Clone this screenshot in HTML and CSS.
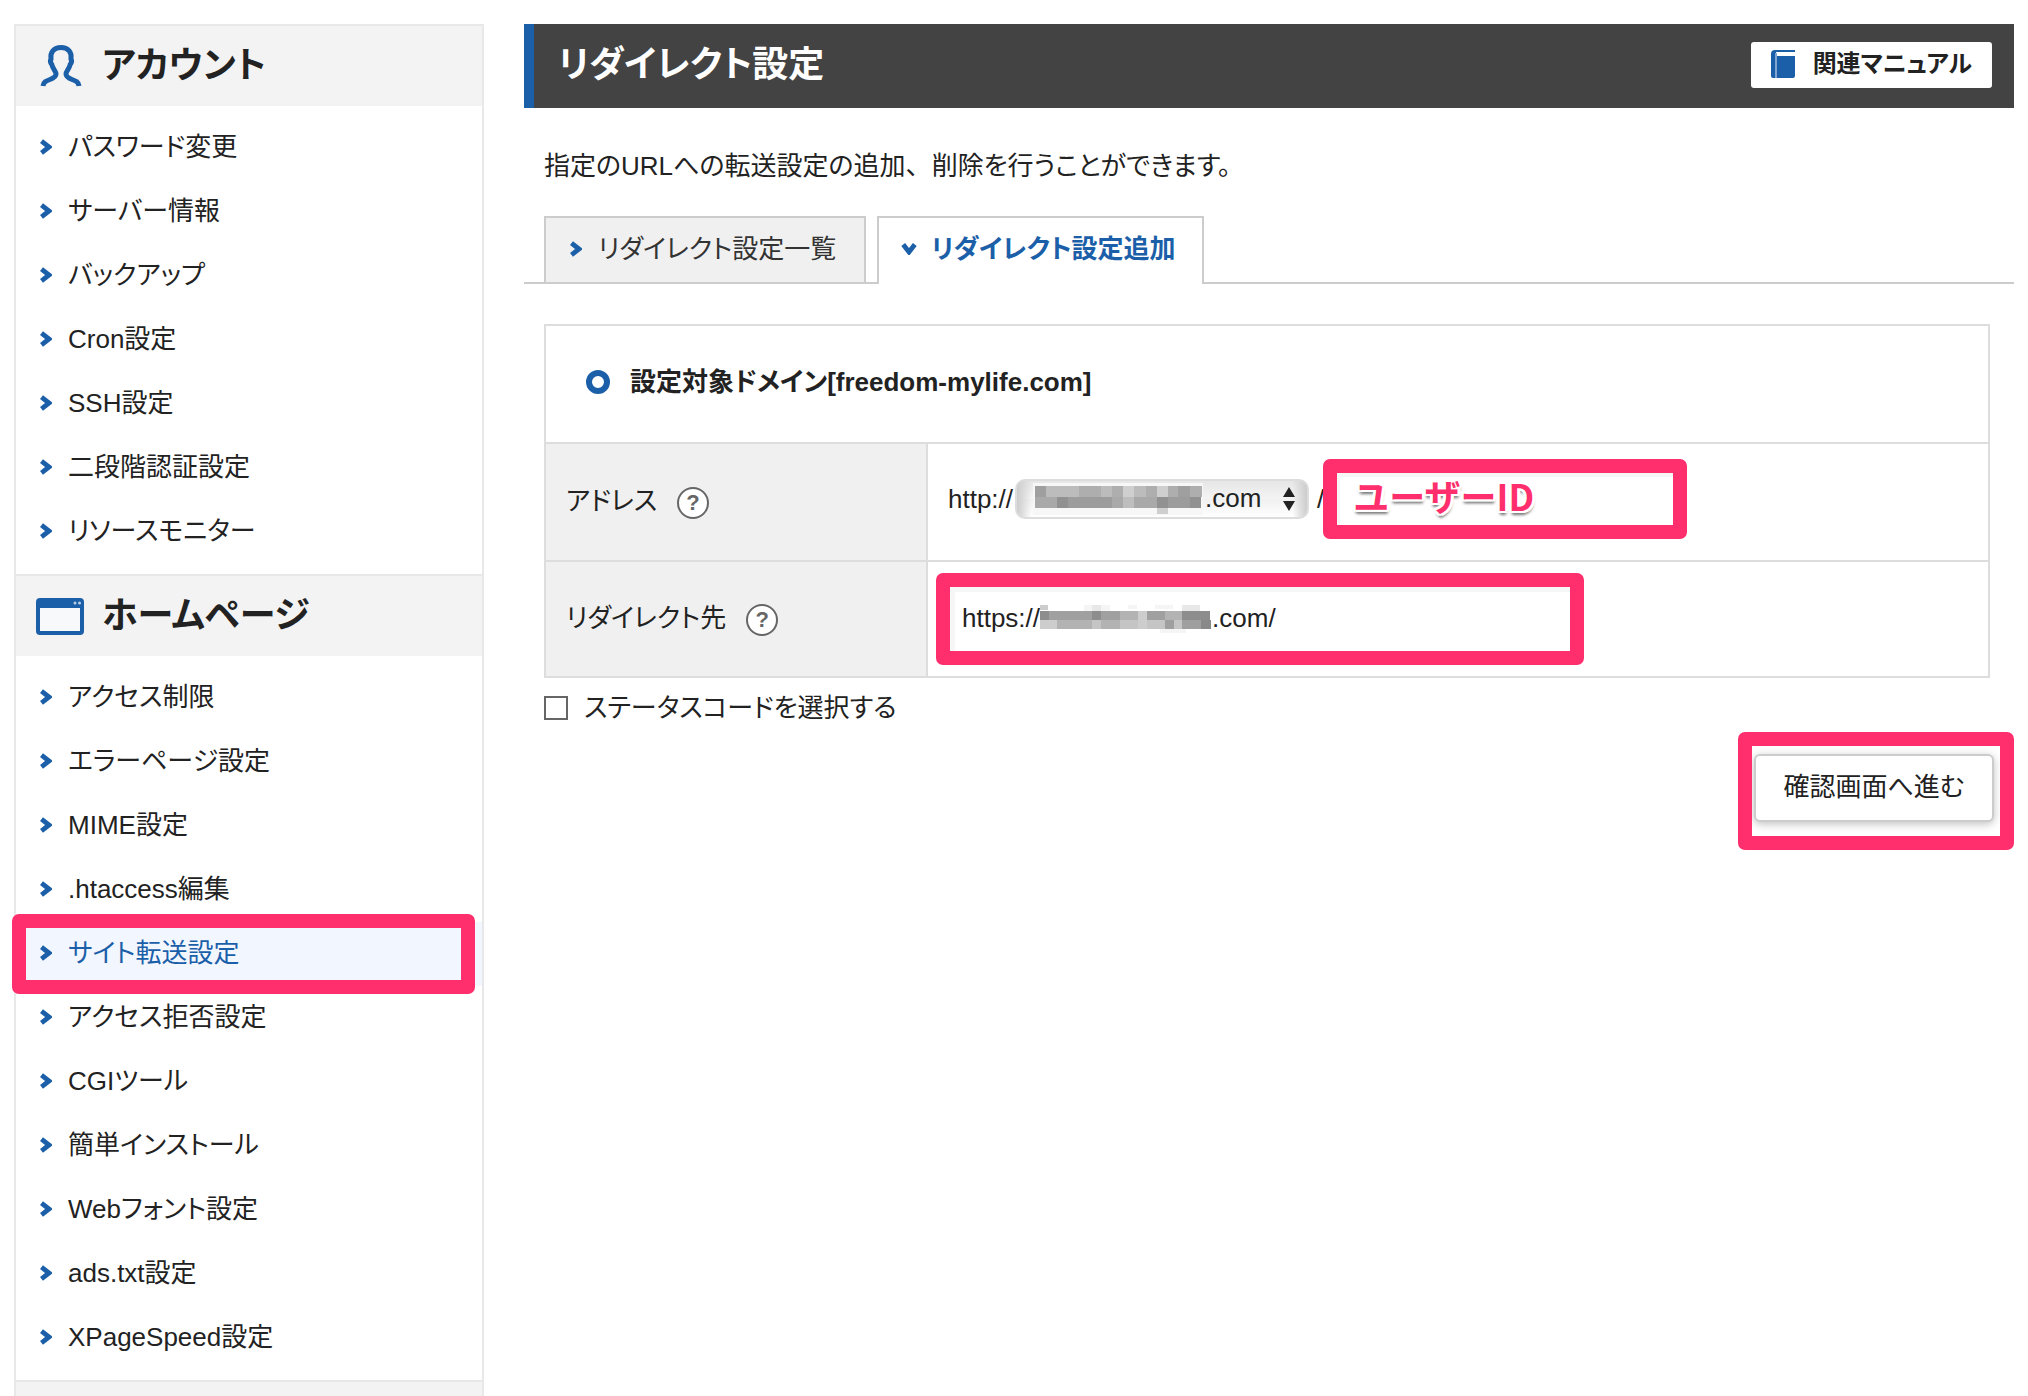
FILE: index.html
```html
<!DOCTYPE html>
<html lang="ja">
<head>
<meta charset="utf-8">
<title>リダイレクト設定</title>
<meta name="viewport" content="width=device-width, initial-scale=1">
<link rel="stylesheet" href="styles.css">
</head>
<body>
<svg width="0" height="0" class="defs" aria-hidden="true">
  <symbol id="chev" viewBox="0 0 12 16"><path d="M1.5 2.2 9 8l-7.500 5.800" fill="none" stroke="currentColor" stroke-width="4.800"/></symbol>
</svg>
<div class="page">
  <nav class="sidebar">
    <h2 class="side-head">
      <svg class="side-icon" viewBox="0 0 48 42" aria-hidden="true"><path d="M7 41c.5-4 3-5 7-6.500 4-1.500 6-3 6-5.500 0-3-3-4.500-4.200-9.500-1.200-1.500-1.600-4-.8-5.500C14 7 18 2.500 25 2.500S36 7 35 14c.8 1.500.4 4-.8 5.500C33 24.500 30 26 30 29c0 2.500 2 4 6 5.500 4 1.500 6.500 2.500 7 6.500" fill="none" stroke="currentColor" stroke-width="5"/></svg>
      アカウント
    </h2>
    <ul class="side-list">
      <li><a href="#"><svg class="chev"><use href="#chev"/></svg>パスワード変更</a></li>
      <li><a href="#"><svg class="chev"><use href="#chev"/></svg>サーバー情報</a></li>
      <li><a href="#"><svg class="chev"><use href="#chev"/></svg>バックアップ</a></li>
      <li><a href="#"><svg class="chev"><use href="#chev"/></svg>Cron設定</a></li>
      <li><a href="#"><svg class="chev"><use href="#chev"/></svg>SSH設定</a></li>
      <li><a href="#"><svg class="chev"><use href="#chev"/></svg>二段階認証設定</a></li>
      <li><a href="#"><svg class="chev"><use href="#chev"/></svg>リソースモニター</a></li>
    </ul>
    <h2 class="side-head">
      <svg class="side-icon" viewBox="0 0 48 42" aria-hidden="true"><rect x="2" y="5" width="44" height="33" rx="2" fill="#f7f9fb" stroke="currentColor" stroke-width="4"/><path d="M2 5h44v8H2z" fill="currentColor"/><circle cx="39" cy="8" r="1.500" fill="#b9cfe6"/><circle cx="43.500" cy="8" r="1.500" fill="#b9cfe6"/></svg>
      ホームページ
    </h2>
    <ul class="side-list">
      <li><a href="#"><svg class="chev"><use href="#chev"/></svg>アクセス制限</a></li>
      <li><a href="#"><svg class="chev"><use href="#chev"/></svg>エラーページ設定</a></li>
      <li><a href="#"><svg class="chev"><use href="#chev"/></svg>MIME設定</a></li>
      <li><a href="#"><svg class="chev"><use href="#chev"/></svg>.htaccess編集</a></li>
      <li class="current"><a href="#" aria-current="page"><svg class="chev"><use href="#chev"/></svg>サイト転送設定</a></li>
      <li><a href="#"><svg class="chev"><use href="#chev"/></svg>アクセス拒否設定</a></li>
      <li><a href="#"><svg class="chev"><use href="#chev"/></svg>CGIツール</a></li>
      <li><a href="#"><svg class="chev"><use href="#chev"/></svg>簡単インストール</a></li>
      <li><a href="#"><svg class="chev"><use href="#chev"/></svg>Webフォント設定</a></li>
      <li><a href="#"><svg class="chev"><use href="#chev"/></svg>ads.txt設定</a></li>
      <li><a href="#"><svg class="chev"><use href="#chev"/></svg>XPageSpeed設定</a></li>
    </ul>
    <div class="side-rest"></div>
  </nav>

  <main class="main">
    <header class="title-bar">
      <h1>リダイレクト設定</h1>
      <a class="manual" href="#">
        <svg class="book" viewBox="0 0 24 28" aria-hidden="true"><path d="M4 0h20v2H5v4h19v20q0 2-2 2H2q-2 0-2-2V4q0-4 4-4z" fill="#1c5fa9"/><path d="M5 2h19v4H7z" fill="#fff"/><path d="M4 3h2v25H4z" fill="#7fa5d0"/></svg>
        関連マニュアル
      </a>
    </header>
    <p class="lead">指定のURLへの転送設定の追加<span class="full">、</span>削除を行うことができます。</p>
    <div class="tabs">
      <a class="tab" href="#"><svg class="chev"><use href="#chev"/></svg>リダイレクト設定一覧</a>
      <a class="tab active" href="#"><svg class="chev-down" viewBox="0 0 16 12"><path d="M2.200 1.500 8 9l5.800-7.500" fill="none" stroke="currentColor" stroke-width="4.800"/></svg>リダイレクト設定追加</a>
    </div>
    <form class="form">
      <table class="settings">
        <colgroup><col class="col-label"><col></colgroup>
        <tr>
          <th class="domain" colspan="2" scope="colgroup"><span class="domain-in"><span class="ring"></span>設定対象ドメイン[freedom-mylife.com]</span></th>
        </tr>
        <tr>
          <th scope="row"><div class="cell"><label for="path">アドレス</label><button type="button" class="help">?</button></div></th>
          <td>
            <div class="cell raised">
              <label for="host">http://</label>
              <span class="select-wrap">
                <select id="host"><option>.com</option></select>
                <svg class="mosaic host-mosaic" viewBox="0 0 170 32" aria-hidden="true"><path fill="#f7f7f7" d="M0 0h170v32H0z"/><path fill="#9f9f9f" d="M2 3h11v11H2zM145 3h12v11h-12z"/><path fill="#bcbcbc" d="M13 3h33v11H13zM68 3h11v11H68zM101 3h12v11h-12z"/><path fill="#aeaeae" d="M46 3h22v11H46zM79 3h11v11H79zM113 3h11v11h-11zM135 3h10v11h-10zM157 3h12v11h-12z"/><path fill="#cfcfcf" d="M90 3h11v11H90zM124 3h11v11h-11zM124 25h11v6h-11z"/><path fill="#a9a9a9" d="M2 14h22v11H2zM79 14h11v11H79zM101 14h23v11h-23z"/><path fill="#919191" d="M24 14h11v11H24zM124 14h11v11h-11zM157 14h11v11h-11z"/><path fill="#9c9c9c" d="M35 14h44v11H35zM135 14h22v11h-22z"/><path fill="#bebebe" d="M90 14h11v11H90z"/></svg>
                <svg class="arrows" viewBox="0 0 12 24" aria-hidden="true"><path d="M0 10h12L6 0zM0 14h12L6 24z" fill="#222"/></svg>
              </span>
              <span class="slash">/</span>
              <span class="field path-field"><input id="path" type="text"><span class="mark"></span><span class="note">ユーザーID</span></span>
            </div>
          </td>
        </tr>
        <tr>
          <th scope="row"><div class="cell"><label for="dest">リダイレクト先</label><button type="button" class="help">?</button></div></th>
          <td>
            <div class="cell">
              <span class="field dest-field">https://<svg class="mosaic" viewBox="0 0 172 30" width="172" height="30" aria-hidden="true"><path fill="#f5f5f5" d="M44 2h26v24H44zM88 2h9v4h-9zM115 2h18v4h-18zM120 26h26v4h-26z"/><path fill="#cdcdcd" d="M0 2h8v5H0zM0 17h17v9H0zM98 8h9v18h-9z"/><path fill="#e8e8e8" d="M52 2h9v6h-9zM142 2h18v6h-18z"/><path fill="#8d8d8d" d="M0 8h9v9H0zM52 8h9v9h-9zM142 8h28v9h-28z"/><path fill="#a0a0a0" d="M9 8h43v9H9zM61 8h19v9H61zM107 8h18v9h-18z"/><path fill="#b3b3b3" d="M80 8h18v9H80zM125 8h17v9h-17zM17 17h35v9H17zM61 17h19v9H61z"/><path fill="#c5c5c5" d="M52 17h9v9h-9zM80 17h18v9H80zM107 17h18v9h-18zM134 17h8v9h-8z"/><path fill="#9f9f9f" d="M125 17h9v9h-9zM142 17h19v9h-19z"/><path fill="#898989" d="M161 17h10v9h-10z"/></svg><input id="dest" type="text" value=".com/"><span class="mark"></span></span>
            </div>
          </td>
        </tr>
      </table>
      <label class="status"><input type="checkbox">ステータスコードを選択する</label>
      <div class="actions">
        <div class="submit-wrap"><button type="submit" class="submit">確認画面へ進む</button><span class="mark"></span></div>
      </div>
    </form>
  </main>
</div>
</body>
</html>
```

FILE: styles.css
```css
* { box-sizing: border-box; }

body {
  margin: 0;
  background: #fff;
  color: #222;
  font: 26px/40px "Liberation Sans", "Noto Sans CJK JP", sans-serif;
  font-feature-settings: "palt";
}

a { color: inherit; text-decoration: none; }
input, select, button { font: inherit; font-feature-settings: inherit; color: inherit; }
.defs { position: absolute; }

.page {
  display: flex;
  gap: 40px;
  min-height: 100vh;
  padding: 24px 14px 0;
}

/* Sidebar */
.sidebar {
  display: flex;
  flex-direction: column;
  flex: 0 0 470px;
  border: 2px solid #e8e8e8;
  border-bottom: 0;
}
.side-head {
  display: flex;
  align-items: center;
  gap: 18px;
  height: 80px;
  margin: 0;
  padding: 0 20px;
  background: #f3f3f3;
  font-size: 36px;
}
.side-icon { width: 48px; height: 42px; color: #1c5fa9; }
.side-list {
  margin: 0;
  padding: 10px 0;
  list-style: none;
  border-bottom: 2px solid #e8e8e8;
}
.side-list a {
  display: flex;
  align-items: center;
  gap: 16px;
  height: 64px;
  padding: 0 24px 2px;
}
.chev { width: 12px; height: 16px; color: #1c5fa9; }
.chev-down { width: 16px; height: 12px; color: #1c5fa9; }
.current { position: relative; background: #f2f7ff; color: #1c5fa9; }
.side-rest { flex: 1; background: #f3f3f3; }

/* Highlight frames drawn over the page */
.mark, .current::after {
  position: absolute;
  inset: -12px;
  border: 14px solid #ff2e6c;
  border-radius: 7px;
  pointer-events: none;
}
.current::after { content: ""; inset: -8px 7px -8px -4px; }

/* Main column */
.main { flex: 1; min-width: 0; }
.title-bar {
  display: flex;
  align-items: center;
  justify-content: space-between;
  height: 84px;
  padding: 0 22px 2px 24px;
  border-left: 10px solid #1c5fa9;
  background: #434343;
}
h1 { margin: 0; color: #fff; font-size: 36px; }
.manual {
  display: flex;
  align-items: center;
  gap: 18px;
  height: 46px;
  padding: 0 20px 2px;
  border-radius: 3px;
  background: #fff;
  font-size: 24px;
  font-weight: bold;
}
.book { width: 24px; height: 28px; }
.lead { margin: 38px 20px 30px; }
.full { font-feature-settings: normal; }

.tabs {
  display: flex;
  gap: 11px;
  padding: 0 20px;
  border-bottom: 2px solid #ccc;
}
.tab {
  display: flex;
  align-items: center;
  gap: 16px;
  height: 66px;
  padding: 0 28px 2px 24px;
  border: 2px solid #ccc;
  border-bottom: 0;
  background: #f0f0f0;
  color: #333;
}
.tab.active {
  gap: 14px;
  height: 68px;
  margin-bottom: -2px;
  padding: 0 26px 4px 22px;
  background: #fff;
  color: #1c5fa9;
  font-weight: bold;
}

.form { padding: 40px 24px 0 20px; }
.settings {
  width: 100%;
  border-collapse: collapse;
  table-layout: fixed;
}
.settings th, .settings td {
  height: 118px;
  padding: 0 20px;
  border: 2px solid #ddd;
  text-align: left;
}
.settings tr:last-child > * { height: 116px; }
.settings th { background: #f0f0f0; font-weight: normal; }
.settings th.domain { padding: 0 40px 4px; background: #fff; font-weight: bold; }
.col-label { width: 382px; }
.cell, .domain-in { display: flex; align-items: center; }
.raised { padding-bottom: 6px; }
.cell label { padding-bottom: 2px; }
.raised label { padding: 0; }
.ring {
  width: 24px;
  height: 24px;
  margin-right: 20px;
  border: 6px solid #1c5fa9;
  border-radius: 50%;
}
.help {
  width: 32px;
  height: 32px;
  margin: 2px 0 0 20px;
  padding: 0;
  border: 2px solid #666;
  border-radius: 50%;
  background: #fff;
  color: #666;
  font-size: 22px;
  font-weight: bold;
  line-height: 28px;
}

.select-wrap { position: relative; margin-left: 2px; }
.select-wrap select {
  display: block;
  width: 294px;
  height: 40px;
  padding: 0 0 2px 188px;
  appearance: none;
  border: 2px solid #ddd;
  border-radius: 10px;
  background: linear-gradient(90deg, #ccc, transparent 5%, transparent 95%, #ccc), linear-gradient(#e6e6e6, #f4f4f4 50%, #f0f0f0 50%, #fff);
  font-family: "Liberation Sans", sans-serif;
  line-height: normal;
}
.mosaic { flex: none; }
.host-mosaic { position: absolute; left: 18px; top: 4px; width: 170px; height: 32px; }
.arrows { position: absolute; right: 14px; top: 8px; width: 12px; height: 24px; }
.slash { margin: 0 11px 0 8px; }

.field { display: flex; align-items: center; position: relative; background: #fff; }
.field input {
  width: 100%;
  min-width: 0;
  padding: 0;
  border: 0;
  background: none;
  outline: 0;
}
.path-field { width: 340px; height: 56px; box-shadow: inset 5px 6px #f6f6f6; }
.dest-field {
  width: 624px;
  height: 70px;
  padding-left: 14px;
  border-bottom: 3px solid #ccc;
  box-shadow: inset 7px 8px #f6f6f6;
}
.dest-field .mark { inset: -11px -12px -14px; }
.note {
  position: absolute;
  left: 18px;
  top: 4px;
  color: #ff2e6c;
  font: bold 36px/40px "Noto Sans CJK JP", sans-serif;
  text-shadow: 2px 0 #fff, -2px 0 #fff, 0 2px #fff, 0 -2px #fff, 2px 2px #fff, -2px 2px #fff, 2px -2px #fff, -2px -2px #fff, 3px 0 #fff, -3px 0 #fff, 0 3px 3px #777, 1px 4px 3px #999;
}

.status { display: flex; align-items: center; gap: 16px; margin-top: 10px; }
.status input {
  width: 24px;
  height: 24px;
  margin: 0;
  appearance: none;
  border: 2px solid #666;
  background: #fff;
}
.actions { display: flex; justify-content: flex-end; margin: 16px -12px 0 0; }
.submit-wrap { position: relative; padding: 10px 8px 16px 4px; }
.submit {
  display: block;
  width: 240px;
  height: 68px;
  padding: 0 0 2px;
  border: 2px solid #ccc;
  border-radius: 6px;
  background: #fff;
  box-shadow: 0 2px 8px rgba(0, 0, 0, .25);
}
```
